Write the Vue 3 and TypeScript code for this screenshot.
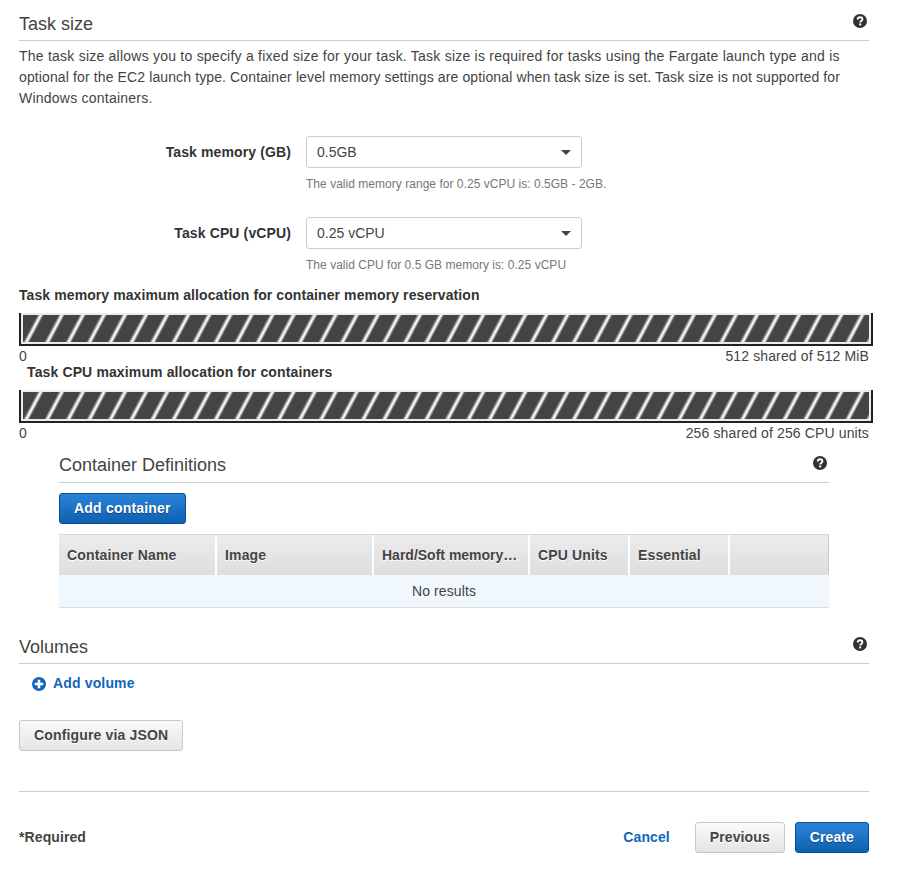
<script setup lang="ts">
interface Field {
  label: string;
  value: string;
  hint: string;
}

interface Allocation {
  title: string;
  max: string;
  inset?: boolean;
}

const fields: Field[] = [
  { label: 'Task memory (GB)', value: '0.5GB', hint: 'The valid memory range for 0.25 vCPU is: 0.5GB - 2GB.' },
  { label: 'Task CPU (vCPU)', value: '0.25 vCPU', hint: 'The valid CPU for 0.5 GB memory is: 0.25 vCPU' },
];

const allocations: Allocation[] = [
  { title: 'Task memory maximum allocation for container memory reservation', max: '512 shared of 512 MiB' },
  { title: 'Task CPU maximum allocation for containers', max: '256 shared of 256 CPU units', inset: true },
];

const columns = [
  { name: 'Container Name', width: 158 },
  { name: 'Image', width: 157 },
  { name: 'Hard/Soft memory…', width: 156 },
  { name: 'CPU Units', width: 100 },
  { name: 'Essential', width: 100 },
  { name: '', width: 99 },
];
</script>

<template>
  <div class="page">
    <section class="task-size">
      <header class="section-head">
        <h2>Task size</h2>
        <svg class="help" viewBox="0 0 14 14">
          <circle cx="7" cy="7" r="7" fill="#333" />
          <path d="M4.700 5.500C4.800 4 5.800 3.300 7.100 3.300c1.300 0 2.300.8 2.300 2 0 1.700-2.200 1.600-2.200 3.200" fill="none" stroke="#fff" stroke-width="1.900" />
          <rect x="6.200" y="9.500" width="2" height="1.900" fill="#fff" />
        </svg>
      </header>
      <p class="description">
        <span class="line-a">The task size allows you to specify a fixed size for your task. Task size is required for tasks using the Fargate launch type and is</span>
        <span class="line-b">optional for the EC2 launch type. Container level memory settings are optional when task size is set. Task size is not supported for</span>
        <span class="line-a">Windows containers.</span>
      </p>

      <div class="fields">
        <div v-for="field in fields" :key="field.label" class="field">
          <label>{{ field.label }}</label>
          <div class="control">
            <div class="select">
              <span>{{ field.value }}</span>
              <i class="caret"></i>
            </div>
            <p class="hint">{{ field.hint }}</p>
          </div>
        </div>
      </div>

      <div v-for="item in allocations" :key="item.title" class="allocation">
        <h4 :class="{ inset: item.inset }">{{ item.title }}</h4>
        <div class="bar"><div class="stripes"></div></div>
        <div class="scale">
          <span>0</span>
          <span>{{ item.max }}</span>
        </div>
      </div>
    </section>

    <section class="containers">
      <header class="section-head small">
        <h2>Container Definitions</h2>
        <svg class="help" viewBox="0 0 14 14">
          <circle cx="7" cy="7" r="7" fill="#333" />
          <path d="M4.700 5.500C4.800 4 5.800 3.300 7.100 3.300c1.300 0 2.300.8 2.300 2 0 1.700-2.200 1.600-2.200 3.200" fill="none" stroke="#fff" stroke-width="1.900" />
          <rect x="6.200" y="9.500" width="2" height="1.900" fill="#fff" />
        </svg>
      </header>
      <button class="btn primary add-container">Add container</button>
      <div class="table">
        <div class="thead">
          <div v-for="col in columns" :key="col.name" class="th" :style="{ width: col.width + 'px' }">
            <span>{{ col.name }}</span>
          </div>
        </div>
        <div class="empty">No results</div>
      </div>
    </section>

    <section class="volumes">
      <header class="section-head">
        <h2>Volumes</h2>
        <svg class="help" viewBox="0 0 14 14">
          <circle cx="7" cy="7" r="7" fill="#333" />
          <path d="M4.700 5.500C4.800 4 5.800 3.300 7.100 3.300c1.300 0 2.300.8 2.300 2 0 1.700-2.200 1.600-2.200 3.200" fill="none" stroke="#fff" stroke-width="1.900" />
          <rect x="6.200" y="9.500" width="2" height="1.900" fill="#fff" />
        </svg>
      </header>
      <a class="add-volume">
        <svg viewBox="0 0 14 14">
          <circle cx="7" cy="7" r="7" fill="#1166bb" />
          <path d="M2.800 5.700h2.900V2.800h2.600v2.900h2.900v2.600H8.300v2.900H5.700V8.300H2.800z" fill="#fff" />
        </svg>
        Add volume
      </a>
    </section>

    <button class="btn default json">Configure via JSON</button>

    <footer class="footer">
      <strong>*Required</strong>
      <div class="actions">
        <a class="cancel">Cancel</a>
        <button class="btn default">Previous</button>
        <button class="btn primary">Create</button>
      </div>
    </footer>
  </div>
</template>

<style>
html,
body {
  margin: 0;
  background: #fff;
}
</style>

<style scoped>
.page {
  box-sizing: border-box;
  width: 909px;
  height: 876px;
  padding: 0 40px 0 19px;
  overflow: hidden;
  font-family: 'Liberation Sans', Arial, sans-serif;
  font-size: 14px;
  line-height: 21px;
  color: #444;
}

.section-head {
  display: flex;
  justify-content: space-between;
  height: 40px;
  border-bottom: 1px solid #ccc;
}

.section-head h2 {
  margin: 12px 0 0;
  font-size: 18px;
  font-weight: 400;
  line-height: 24px;
  color: #444;
}

.help {
  width: 14px;
  height: 14px;
  margin: 14px 2px 0 0;
}

.description {
  margin: 5px 0 0;
}

.description span {
  display: block;
  white-space: nowrap;
}

.line-a {
  letter-spacing: 0.23px;
}

.line-b {
  letter-spacing: 0.12px;
}

.fields {
  margin-top: 27px;
}

.field {
  display: flex;
  height: 81px;
}

.field label {
  width: 272px;
  padding-top: 6px;
  text-align: right;
  font-weight: 700;
  letter-spacing: 0.12px;
  color: #333;
}

.control {
  margin-left: 15px;
  width: 276px;
}

.select {
  box-sizing: border-box;
  display: flex;
  align-items: center;
  justify-content: space-between;
  height: 32px;
  padding: 0 10px;
  border: 1px solid #ccc;
  border-radius: 3px;
  color: #444;
}

.caret {
  width: 0;
  height: 0;
  border-left: 5.5px solid transparent;
  border-right: 5.5px solid transparent;
  border-top: 5.5px solid #444;
}

.hint {
  margin: 6px 0 0;
  white-space: nowrap;
  font-size: 12px;
  line-height: 21px;
  letter-spacing: 0.03px;
  color: #777;
}

.fields + .allocation {
  margin-top: -13px;
}

.allocation h4 {
  margin: 0;
  font-size: 14px;
  line-height: 21px;
  font-weight: 700;
  letter-spacing: 0.09px;
  color: #333;
}

.allocation h4.inset {
  padding-left: 8px;
  letter-spacing: 0.13px;
}

.bar {
  box-sizing: border-box;
  width: 854px;
  height: 33px;
  margin-top: 7px;
  border: 2px solid #222;
  border-top: 0;
  padding: 2px;
  background: #e9eded;
}

.stripes {
  height: 100%;
  background: repeating-linear-gradient(118deg, #444 0 12.6px, #fff 15.6px, #fff 16px, #444 18.600px);
}

.scale {
  display: flex;
  justify-content: space-between;
  height: 21px;
  margin-bottom: -5px;
  letter-spacing: 0.13px;
}

.containers {
  margin: 0 40px;
  padding-top: 5px;
}

.section-head.small {
  height: 38px;
}

.section-head.small h2 {
  margin-top: 9px;
}

.section-head.small .help {
  margin-top: 12px;
}

.btn {
  box-sizing: border-box;
  height: 31px;
  padding: 0 14px;
  border-radius: 3px;
  font-family: inherit;
  font-size: 14px;
  font-weight: 700;
  letter-spacing: 0.1px;
}

.btn.primary {
  border: 1px solid #0a4f96;
  color: #fff;
  background: linear-gradient(#2a83d8, #0f60b0);
  text-shadow: 0 1px 1px rgba(0, 0, 0, 0.4);
}

.btn.default {
  border: 1px solid #c8c8c8;
  color: #444;
  background: linear-gradient(#fafafa, #e4e4e4);
  text-shadow: 0 1px 0 #fff;
}

.add-container {
  display: block;
  margin-top: 10px;
  padding-bottom: 2px;
  letter-spacing: 0.2px;
}

.table {
  margin-top: 10px;
  border-bottom: 1px solid #ddd;
}

.thead {
  display: flex;
  box-sizing: border-box;
  height: 41px;
  border-top: 1px solid #d5d5d5;
  background: linear-gradient(#ececec, #dedede);
}

.th {
  box-sizing: border-box;
  padding: 0 8px;
  border-right: 2px solid #fff;
  font-weight: 700;
  letter-spacing: 0.15px;
  line-height: 40px;
  color: #444;
  text-shadow: 0 1px 0 #fff;
  white-space: nowrap;
}

.th:nth-child(3) {
  letter-spacing: 0;
}

.th:last-child {
  border-right: 1px solid #ccc;
}

.empty {
  height: 32px;
  line-height: 32px;
  text-align: center;
  letter-spacing: 0.1px;
  background: #f0f7fd;
}

.volumes {
  margin-top: 15px;
}

.add-volume {
  display: inline-flex;
  align-items: center;
  gap: 7px;
  margin: 9px 0 0 13px;
  font-weight: 700;
  letter-spacing: 0.15px;
  color: #1166bb;
}

.add-volume svg {
  width: 14px;
  height: 14px;
}

.json {
  display: block;
  margin-top: 23px;
  letter-spacing: 0.16px;
}

.footer {
  display: flex;
  align-items: center;
  justify-content: space-between;
  margin-top: 40px;
  padding-top: 30px;
  border-top: 1px solid #ccc;
}

.footer strong {
  letter-spacing: 0.1px;
  color: #444;
}

.actions {
  display: flex;
  align-items: center;
  gap: 10px;
}

.cancel {
  margin-right: 15px;
  font-weight: 700;
  letter-spacing: 0.1px;
  color: #1166bb;
}
</style>
